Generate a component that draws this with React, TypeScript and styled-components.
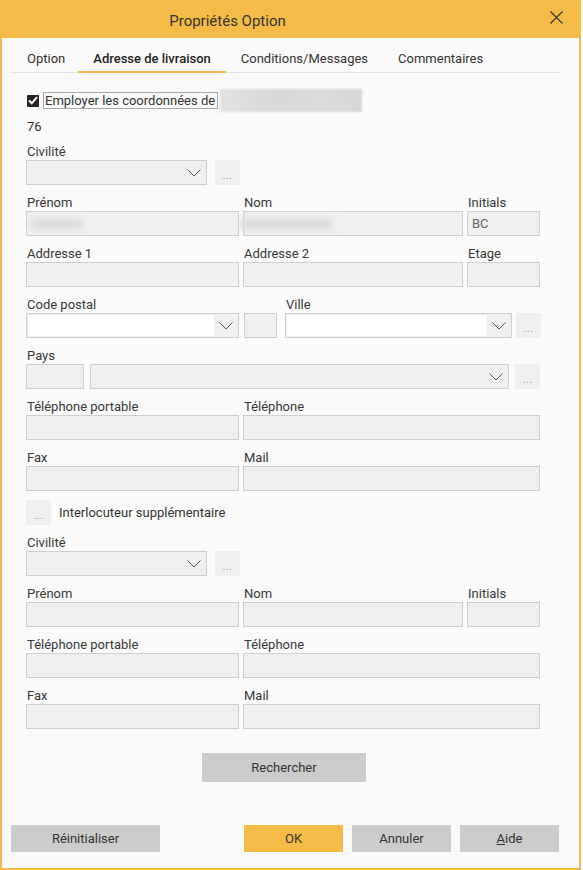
import React from 'react';
import styled, { createGlobalStyle, css } from 'styled-components';

const GlobalStyle = createGlobalStyle`
  html, body {
    margin: 0;
    padding: 0;
    background: #ffffff;
  }
  body {
    font-family: Roboto, 'Liberation Sans', sans-serif;
    color: #333333;
  }
  * {
    box-sizing: border-box;
  }
`;

const YELLOW = '#f4bc47';

const Window = styled.div`
  display: flex;
  flex-direction: column;
  width: 581px;
  height: 870px;
  background-color: #fafafa;
  border: 2px solid ${YELLOW};
  border-top: none;
`;

const TitleBar = styled.div`
  display: flex;
  align-items: center;
  height: 38px;
  background-color: ${YELLOW};
`;

const Title = styled.div`
  flex: 1;
  padding: 3px 86px 0 0;
  margin-right: 10px;
  text-align: center;
  font-size: 15px;
  color: #333333;
`;

const CloseButton = styled.button`
  display: flex;
  align-items: center;
  justify-content: center;
  width: 14px;
  height: 14px;
  margin: -3px 16px 0 0;
  padding: 0;
  border: none;
  background: none;
`;

const TabBar = styled.div`
  display: flex;
  margin: 8px 19px 0 8px;
  border-bottom: 1px solid #e4e4e4;
`;

const Tab = styled.div<{ $active?: boolean }>`
  position: relative;
  height: 26px;
  padding: 0 15px;
  line-height: 26px;
  font-size: 13px;
  color: #333333;
  &:first-child {
    padding-left: 17px;
    padding-right: 13px;
  }
  ${props =>
    props.$active &&
    css`
      font-weight: 500;
      color: #222222;
      &::after {
        content: '';
        position: absolute;
        left: 0;
        right: 0;
        bottom: -1px;
        height: 2px;
        background-color: ${YELLOW};
      }
    `}
`;

const Form = styled.div`
  display: flex;
  flex-direction: column;
  gap: 10px;
  margin-top: 16px;
  padding: 0 38px 0 24px;
`;

const Block = styled.div<{ $mt?: number }>`
  margin-top: ${props => props.$mt ?? 0}px;
`;

const CheckRow = styled.div`
  display: flex;
  align-items: center;
  height: 23px;
  padding-left: 1px;
`;

const CheckBox = styled.span`
  display: flex;
  align-items: center;
  justify-content: center;
  width: 12px;
  height: 12px;
  background-color: #2a2222;
  border-radius: 1px;
`;

const CheckLabel = styled.span`
  margin-left: 4px;
  padding: 0 2px 0 1px;
  height: 17px;
  line-height: 15px;
  font-size: 13px;
  border: 1px solid #a8a8a8;
  color: #333333;
`;

const Redacted = styled.span<{ $w: number; $h: number }>`
  display: inline-block;
  width: ${props => props.$w}px;
  height: ${props => props.$h}px;
  background-color: #d9d9d9;
  filter: blur(3px);
`;

const NameBlur = styled.span`
  display: inline-block;
  width: 142px;
  height: 23px;
  margin-left: 2px;
  background: linear-gradient(90deg, #e2e2e2, #d8d8d8 40%, #dcdcdc 70%, #d6d6d6);
  filter: blur(1px);
`;

const PlainText = styled.div`
  height: 16px;
  line-height: 16px;
  font-size: 13px;
  padding-left: 1px;
`;

const Label = styled.div`
  height: 16px;
  line-height: 16px;
  font-size: 13px;
  color: #383838;
  padding-left: 1px;
  white-space: nowrap;
`;

const Row = styled.div<{ $cols: string; $gap?: number }>`
  display: grid;
  grid-template-columns: ${props => props.$cols};
  column-gap: ${props => props.$gap ?? 4}px;
`;

const Line = styled.div<{ $gap: number }>`
  display: flex;
  gap: ${props => props.$gap}px;
`;

const Input = styled.div<{ $w?: number }>`
  display: flex;
  align-items: center;
  width: ${props => (props.$w ? `${props.$w}px` : '100%')};
  height: 25px;
  padding-left: 4px;
  background-color: #efefef;
  border: 1px solid #cfcfcf;
  font-size: 13px;
  color: #666666;
  overflow: visible;
`;

const SelectFrame = styled.div<{ $w: number }>`
  display: flex;
  align-items: stretch;
  width: ${props => props.$w}px;
  height: 25px;
  background-color: #efefef;
  border: 1px solid #cfcfcf;
`;

const SelectValue = styled.div<{ $editable?: boolean }>`
  flex: 1;
  margin: ${props => (props.$editable ? '1px 0 1px 1px' : '0')};
  background-color: ${props => (props.$editable ? '#ffffff' : 'transparent')};
`;

const Chevron = styled.div`
  display: flex;
  align-items: center;
  justify-content: center;
  width: 24px;
`;

const DotsButton = styled.button`
  flex-shrink: 0;
  width: 25px;
  height: 25px;
  padding: 6px 0 0;
  border: none;
  background-color: #efefef;
  color: #9a9a9a;
  font-family: Roboto, 'Liberation Sans', sans-serif;
  font-size: 11px;
  letter-spacing: 0.5px;
`;

const ExtraRow = styled.div`
  display: flex;
  align-items: center;
  gap: 8px;
  font-size: 13px;
`;

const Button = styled.button<{ $w: number; $h?: number; $primary?: boolean }>`
  width: ${props => props.$w}px;
  height: ${props => props.$h ?? 27}px;
  padding: 0;
  border: none;
  background-color: ${props => (props.$primary ? YELLOW : '#cccccc')};
  color: #333333;
  font-family: Roboto, 'Liberation Sans', sans-serif;
  font-size: 13px;
`;

const SearchButton = styled(Button)`
  align-self: center;
  margin-top: 14px;
  margin-left: 1px;
`;

const Footer = styled.div`
  display: flex;
  gap: 9px;
  margin-top: auto;
  padding: 0 20px 16px 9px;
`;

const Spacer = styled.div`
  flex: 1;
`;

const ChevronIcon = () => (
  <svg width='14' height='8' viewBox='0 0 14 8'>
    <polyline points='0.5,0.5 7,7 13.5,0.5' fill='none' stroke='#555' strokeWidth='1' />
  </svg>
);

const Select = ({ w, editable }: { w: number; editable?: boolean }) => (
  <SelectFrame $w={w}>
    <SelectValue $editable={editable} />
    <Chevron>
      <ChevronIcon />
    </Chevron>
  </SelectFrame>
);

const Field = ({ label, children }: { label: string; children: React.ReactNode }) => (
  <div>
    <Label>{label}</Label>
    {children}
  </div>
);

const Dots = () => <DotsButton>...</DotsButton>;

const Contact = ({ mt, nomBlur, prenomBlur, initials, extended }: {
  mt?: number;
  nomBlur?: boolean;
  prenomBlur?: boolean;
  initials?: string;
  extended?: boolean;
}) => (
  <>
    <Block $mt={mt}>
      <Label>Civilité</Label>
      <Line $gap={8}>
        <Select w={181} />
        <Dots />
      </Line>
    </Block>
    <Row $cols='213px 220px 73px'>
      <Field label='Prénom'>
        <Input>{prenomBlur && <Redacted $w={52} $h={10} />}</Input>
      </Field>
      <Field label='Nom'>
        <Input>{nomBlur && <Redacted $w={92} $h={10} style={{ marginLeft: -8 }} />}</Input>
      </Field>
      <Field label='Initials'>
        <Input>{initials}</Input>
      </Field>
    </Row>
    {extended && (
      <>
        <Row $cols='213px 220px 73px'>
          <Field label='Addresse 1'>
            <Input />
          </Field>
          <Field label='Addresse 2'>
            <Input />
          </Field>
          <Field label='Etage'>
            <Input />
          </Field>
        </Row>
        <Line $gap={8}>
          <div>
            <Label>Code postal</Label>
            <Line $gap={5}>
              <Select w={213} editable />
              <Input $w={33} />
            </Line>
          </div>
          <div>
            <Label>Ville</Label>
            <Line $gap={4}>
              <Select w={227} editable />
              <Dots />
            </Line>
          </div>
        </Line>
        <div>
          <Label>Pays</Label>
          <Line $gap={6}>
            <Input $w={58} />
            <Select w={419} />
            <Dots />
          </Line>
        </div>
      </>
    )}
    <Row $cols='213px 297px'>
      <Field label='Téléphone portable'>
        <Input />
      </Field>
      <Field label='Téléphone'>
        <Input />
      </Field>
    </Row>
    <Row $cols='213px 297px'>
      <Field label='Fax'>
        <Input />
      </Field>
      <Field label='Mail'>
        <Input />
      </Field>
    </Row>
  </>
);

export default function App() {
  return (
    <>
      <GlobalStyle />
      <Window>
        <TitleBar>
          <Title>Propriétés Option</Title>
          <CloseButton aria-label='Fermer'>
            <svg width='13' height='13' viewBox='0 0 13 13'>
              <path d='M0.5 0.5 L12.5 12.5 M12.5 0.5 L0.5 12.5' stroke='#333' strokeWidth='1.1' />
            </svg>
          </CloseButton>
        </TitleBar>

        <TabBar>
          <Tab>Option</Tab>
          <Tab $active>Adresse de livraison</Tab>
          <Tab>Conditions/Messages</Tab>
          <Tab>Commentaires</Tab>
        </TabBar>

        <Form>
          <CheckRow>
            <CheckBox>
              <svg width='10' height='9' viewBox='0 0 10 9'>
                <polyline points='1,4.5 3.8,7.3 9,1.2' fill='none' stroke='#fff' strokeWidth='2' />
              </svg>
            </CheckBox>
            <CheckLabel>Employer les coordonnées de</CheckLabel>
            <NameBlur />
          </CheckRow>
          <Block $mt={-3}>
            <PlainText>76</PlainText>
          </Block>

          <Contact mt={-1} prenomBlur nomBlur initials='BC' extended />

          <Block $mt={-1}>
            <ExtraRow>
              <Dots />
              <span>Interlocuteur supplémentaire</span>
            </ExtraRow>
          </Block>

          <Contact />

          <SearchButton $w={164} $h={29}>
            Rechercher
          </SearchButton>
        </Form>

        <Footer>
          <Button $w={149}>Réinitialiser</Button>
          <Spacer />
          <Button $w={99} $primary>
            OK
          </Button>
          <Button $w={99}>Annuler</Button>
          <Button $w={99}>
            <u>A</u>ide
          </Button>
        </Footer>
      </Window>
    </>
  );
}
